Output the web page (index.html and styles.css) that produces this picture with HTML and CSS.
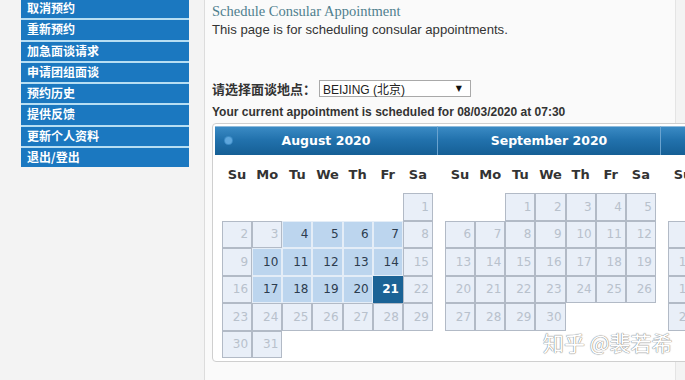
FILE: index.html
```html
<!DOCTYPE html>
<html>
<head>
<meta charset="utf-8">
<link rel="stylesheet" href="styles.css">
</head>
<body>
<div class="page">
  <nav class="side">
    <ul class="menu">
      <li>取消预约</li>
      <li>重新预约</li>
      <li>加急面谈请求</li>
      <li>申请团组面谈</li>
      <li>预约历史</li>
      <li>提供反馈</li>
      <li>更新个人资料</li>
      <li>退出/登出</li>
    </ul>
  </nav>
  <main class="main">
    <h1 class="title">Schedule Consular Appointment</h1>
    <p class="intro">This page is for scheduling consular appointments.</p>
    <div class="loc">
      <span class="loc-label">请选择面谈地点：</span>
      <span class="select"><span class="select-text">BEIJING (北京)</span><span class="select-arrow">▼</span></span>
    </div>
    <p class="current">Your current appointment is scheduled for 08/03/2020 at 07:30</p>
    <div class="cal">
      <div class="month">
        <div class="mhead"><span class="prev"></span>August 2020</div>
        <table class="grid">
          <thead><tr><th>Su</th><th>Mo</th><th>Tu</th><th>We</th><th>Th</th><th>Fr</th><th>Sa</th></tr></thead>
          <tbody>
            <tr><td></td><td></td><td></td><td></td><td></td><td></td><td class="d">1</td></tr>
            <tr><td class="d">2</td><td class="d">3</td><td class="a">4</td><td class="a">5</td><td class="a">6</td><td class="a">7</td><td class="d">8</td></tr>
            <tr><td class="d">9</td><td class="a">10</td><td class="a">11</td><td class="a">12</td><td class="a">13</td><td class="a">14</td><td class="d">15</td></tr>
            <tr><td class="d">16</td><td class="a">17</td><td class="a">18</td><td class="a">19</td><td class="a">20</td><td class="s">21</td><td class="d">22</td></tr>
            <tr><td class="d">23</td><td class="d">24</td><td class="d">25</td><td class="d">26</td><td class="d">27</td><td class="d">28</td><td class="d">29</td></tr>
            <tr><td class="d">30</td><td class="d">31</td><td></td><td></td><td></td><td></td><td></td></tr>
          </tbody>
        </table>
      </div>
      <div class="month">
        <div class="mhead">September 2020</div>
        <table class="grid">
          <thead><tr><th>Su</th><th>Mo</th><th>Tu</th><th>We</th><th>Th</th><th>Fr</th><th>Sa</th></tr></thead>
          <tbody>
            <tr><td></td><td></td><td class="d">1</td><td class="d">2</td><td class="d">3</td><td class="d">4</td><td class="d">5</td></tr>
            <tr><td class="d">6</td><td class="d">7</td><td class="d">8</td><td class="d">9</td><td class="d">10</td><td class="d">11</td><td class="d">12</td></tr>
            <tr><td class="d">13</td><td class="d">14</td><td class="d">15</td><td class="d">16</td><td class="d">17</td><td class="d">18</td><td class="d">19</td></tr>
            <tr><td class="d">20</td><td class="d">21</td><td class="d">22</td><td class="d">23</td><td class="d">24</td><td class="d">25</td><td class="d">26</td></tr>
            <tr><td class="d">27</td><td class="d">28</td><td class="d">29</td><td class="d">30</td><td></td><td></td><td></td></tr>
          </tbody>
        </table>
      </div>
      <div class="month">
        <div class="mhead">October 2020</div>
        <table class="grid">
          <thead><tr><th>Su</th><th>Mo</th><th>Tu</th><th>We</th><th>Th</th><th>Fr</th><th>Sa</th></tr></thead>
          <tbody>
            <tr><td></td><td></td><td></td><td></td><td class="d">1</td><td class="d">2</td><td class="d">3</td></tr>
            <tr><td class="d">4</td><td class="d">5</td><td class="d">6</td><td class="d">7</td><td class="d">8</td><td class="d">9</td><td class="d">10</td></tr>
            <tr><td class="d">11</td><td class="d">12</td><td class="d">13</td><td class="d">14</td><td class="d">15</td><td class="d">16</td><td class="d">17</td></tr>
            <tr><td class="d">18</td><td class="d">19</td><td class="d">20</td><td class="d">21</td><td class="d">22</td><td class="d">23</td><td class="d">24</td></tr>
            <tr><td class="d">25</td><td class="d">26</td><td class="d">27</td><td class="d">28</td><td class="d">29</td><td class="d">30</td><td class="d">31</td></tr>
          </tbody>
        </table>
      </div>
    </div>
    <div class="watermark">知乎 @裴若希</div>
  </main>
</div>
</body>
</html>
```

FILE: styles.css
```css
html, body {
  margin: 0;
  padding: 0;
  background: #f3f3f3;
  overflow: hidden;
  width: 685px;
  height: 380px;
}
.page {
  display: flex;
  align-items: flex-start;
  height: 380px;
}
.side {
  width: 168px;
  margin-left: 21px;
  flex: none;
}
.menu {
  list-style: none;
  margin: -1px 0 0 0;
  padding: 0;
  background: #b7def3;
}
.menu li {
  height: 19.3px;
  line-height: 19px;
  margin-bottom: 2px;
  background: #1b78c0;
  color: #fff;
  font: bold 12px "Noto Sans CJK SC", sans-serif;
  padding-left: 6px;
  white-space: nowrap;
}
.main {
  position: relative;
  flex: none;
  width: 463px;
  height: 380px;
  margin-left: 15px;
  padding-left: 7px;
  border-left: 1px solid #dcdcdc;
  border-right: 1px solid #e4e4e4;
  background: #fafafa;
  color: #333;
}
.title {
  margin: 2px 0 0 0;
  font: normal 14.5px/18px "Liberation Serif", serif;
  color: #4f7f8e;
}
.intro {
  margin: 2px 0 0 0;
  font: 13.15px/16px "Liberation Sans", Arial, sans-serif;
  color: #333;
}
.loc {
  display: flex;
  align-items: center;
  margin-top: 42px;
  height: 17px;
}
.loc-label {
  font: bold 13px "Noto Sans CJK SC", sans-serif;
  color: #333;
  width: 107px;
  white-space: nowrap;
}
.select {
  display: flex;
  align-items: center;
  justify-content: space-between;
  width: 139px;
  height: 15px;
  border: 1px solid #a9a9a9;
  background: #fff;
  padding: 0 8px 0 3px;
  box-sizing: content-box;
}
.select-text {
  font: 12px "Liberation Sans", "Noto Sans CJK SC", sans-serif;
  color: #222;
}
.select-arrow {
  font: 8px "DejaVu Sans", sans-serif;
  color: #111;
}
.current {
  margin: 7px 0 0 0;
  font: bold 12px/16px "Liberation Sans", Arial, sans-serif;
  color: #333;
}
.cal {
  display: flex;
  margin-top: 3px;
  width: 700px;
  height: 233px;
  border: 1px solid #cfcfcf;
  border-radius: 4px;
  padding: 2px;
  background: #fff;
}
.month {
  flex: none;
  width: 223px;
}
.mhead {
  position: relative;
  height: 29px;
  text-align: center;
  color: #fff;
  font: bold 12.5px/28px "DejaVu Sans", sans-serif;
  background: linear-gradient(#3a8ac4 0%, #2272ad 45%, #155f95 100%);
  border-right: 1px solid #6aa3cf;
  border-top: 1px solid #8fbbdc;
  box-sizing: border-box;
}
.prev {
  position: absolute;
  left: 10px;
  top: 10px;
  width: 7px;
  height: 7px;
  border-radius: 50%;
  background: #5ea6dc;
  box-shadow: 0 0 0 1px #3d8cc6;
}
.grid {
  margin-left: 7px;
  border-collapse: separate;
  border-spacing: 0;
  table-layout: fixed;
  width: 211px;
}
.grid th {
  height: 38px;
  padding: 0;
  font: bold 13px "DejaVu Sans", sans-serif;
  color: #333;
  text-align: center;
}
.grid td {
  height: 25.5px;
  padding: 0 3px 0 0;
  font: 12px "DejaVu Sans", sans-serif;
  text-align: right;
  border: 1px solid transparent;
}
.grid td.d {
  background: #e9eff8;
  border-color: #b2bac6;
  color: #b8c1cc;
}
.grid td.a {
  background: #bcd5ee;
  border-color: #e4edf7;
  color: #2c3c4e;
}
.grid td.s {
  background: #1b6396;
  border-color: #1b6396;
  color: #fff;
  font-weight: bold;
}
.watermark {
  position: absolute;
  left: 338px;
  top: 327px;
  font: 21px "Noto Sans CJK SC", sans-serif;
  color: #fff;
  text-shadow: 0 0 1px #777, 0 0 1px #777;
  white-space: nowrap;
}
```
